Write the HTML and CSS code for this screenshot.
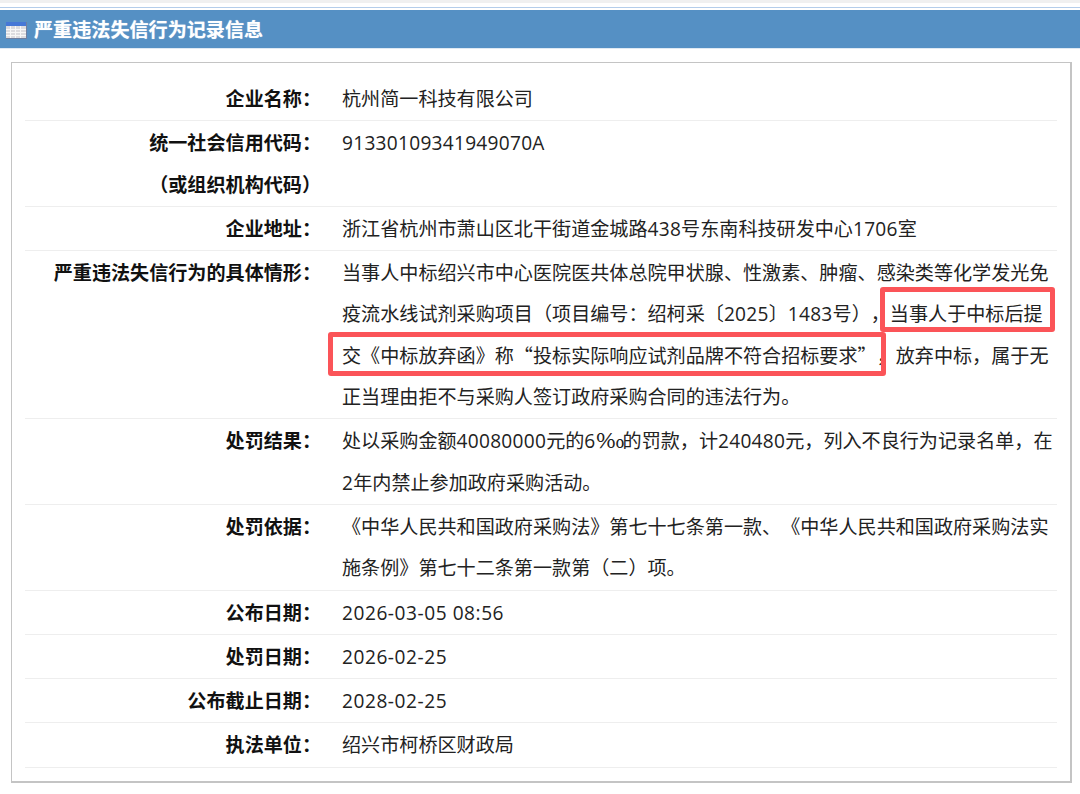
FILE: index.html
```html
<!DOCTYPE html>
<html lang="zh-CN">
<head>
<meta charset="utf-8">
<title>严重违法失信行为记录信息</title>
<link rel="stylesheet" href="styles.css">
</head>
<body>
<div class="topstrip"></div>
<div class="topline"></div>
<h1 class="title">
<svg class="title-icon" width="21" height="17" viewBox="0 0 21 17">
<rect x="0" y="0" width="21" height="17" fill="#6f7f9f"/>
<rect x="0" y="0" width="20" height="16" fill="#dcdcdf"/>
<rect x="0" y="0" width="20" height="4" fill="#4678d6"/>
<path d="M0 7.5H20M0 10.5H20M0 13.5H20M4.5 4V16M9.5 4V16M14.5 4V16" stroke="#f7f7f7" stroke-width="1" fill="none"/>
</svg>
<span>严重违法失信行为记录信息</span></h1>
<div class="panel">
<div class="row"><div class="label">企业名称：</div><div class="value">杭州简一科技有限公司</div></div>
<div class="row"><div class="label">统一社会信用代码：<br>（或组织机构代码）</div><div class="value"><span class="num">91330109341949070A</span></div></div>
<div class="row"><div class="label">企业地址：</div><div class="value">浙江省杭州市萧山区北干街道金城路<span class="num">438</span>号东南科技研发中心<span class="num">1706</span>室</div></div>
<div class="row"><div class="label">严重违法失信行为的具体情形：</div><div class="value">当事人中标绍兴市中心医院医共体总院甲状腺、性激素、肿瘤、感染类等化学发光免<br>疫流水线试剂采购项目（项目编号：绍柯采〔<span class="num">2025</span>〕<span class="num">1483</span>号），当事人于中标后提<br>交《中标放弃函》称“投标实际响应试剂品牌不符合招标要求”，放弃中标，属于无<br>正当理由拒不与采购人签订政府采购合同的违法行为。</div></div>
<div class="row"><div class="label">处罚结果：</div><div class="value">处以采购金额<span class="num">40080000</span>元的<span class="num">6</span><span class="permille">‰</span>的罚款，计<span class="num">240480</span>元，列入不良行为记录名单，在<br><span class="num">2</span>年内禁止参加政府采购活动。</div></div>
<div class="row"><div class="label">处罚依据：</div><div class="value">《中华人民共和国政府采购法》第七十七条第一款、《中华人民共和国政府采购法实<br>施条例》第七十二条第一款第（二）项。</div></div>
<div class="row"><div class="label">公布日期：</div><div class="value"><span class="num date">2026-03-05 08:56</span></div></div>
<div class="row"><div class="label">处罚日期：</div><div class="value"><span class="num date">2026-02-25</span></div></div>
<div class="row"><div class="label">公布截止日期：</div><div class="value"><span class="num date">2028-02-25</span></div></div>
<div class="row"><div class="label">执法单位：</div><div class="value">绍兴市柯桥区财政局</div></div>
</div>
<div class="mark mark-a"></div>
<div class="mark mark-b"></div>
</body>
</html>
```
FILE: styles.css
```css
html, body { margin: 0; padding: 0; background: #fff; }
body {
  width: 1080px; height: 794px; overflow: hidden; position: relative;
  font-family: "Noto Sans CJK SC", "Liberation Sans", sans-serif;
  color: #222;
  text-spacing-trim: space-all;
  font-kerning: none;
}
.topstrip { height: 3px; background: #f0f0f0; margin-bottom: 4px; }
.topline { height: 1px; background: #b4cdea; margin-bottom: 2px; }
.title {
  margin: 0; height: 38px; background: #5590c4; color: #fff;
  font-size: 19.1px; font-weight: 700; line-height: 40px;
  display: flex; align-items: center; gap: 7px; padding-left: 6px;
  border-bottom: 1px solid #dfe9f3;
  text-shadow: 0 0 1px rgba(255, 255, 255, 0.6);
}
.title-icon { flex: none; margin-top: 3px; }
.panel {
  margin: 13px 8px 0 11px; padding: 14px 13px 13px 13px;
  border: solid #c4c4c4; border-width: 1px 2px 2px 1px; background: #fff;
}
.row { display: flex; border-bottom: 1px solid #eee; padding: 1px 0; }
.label {
  width: 296px; flex: none; text-align: right; font-weight: 700;
  font-size: 19.1px; line-height: 41.3px; color: #111;
}
.value {
  margin-left: 21px; font-size: 19.1px; line-height: 41.3px; white-space: nowrap; color: #222;
}
.num { font-family: "Open Sans", "Liberation Sans", sans-serif; letter-spacing: 0.28px; line-height: 1; }
.date { letter-spacing: 0.55px; }
.permille { display: inline-block; width: 27px; line-height: 1; transform: scaleX(1.5); transform-origin: left center; }
.mark { position: absolute; border: 5px solid #fb5458; border-radius: 3px; box-sizing: border-box; }
.mark-a { left: 880px; top: 287px; width: 175px; height: 45px; }
.mark-b { left: 328px; top: 332px; width: 558px; height: 44px; }
```
